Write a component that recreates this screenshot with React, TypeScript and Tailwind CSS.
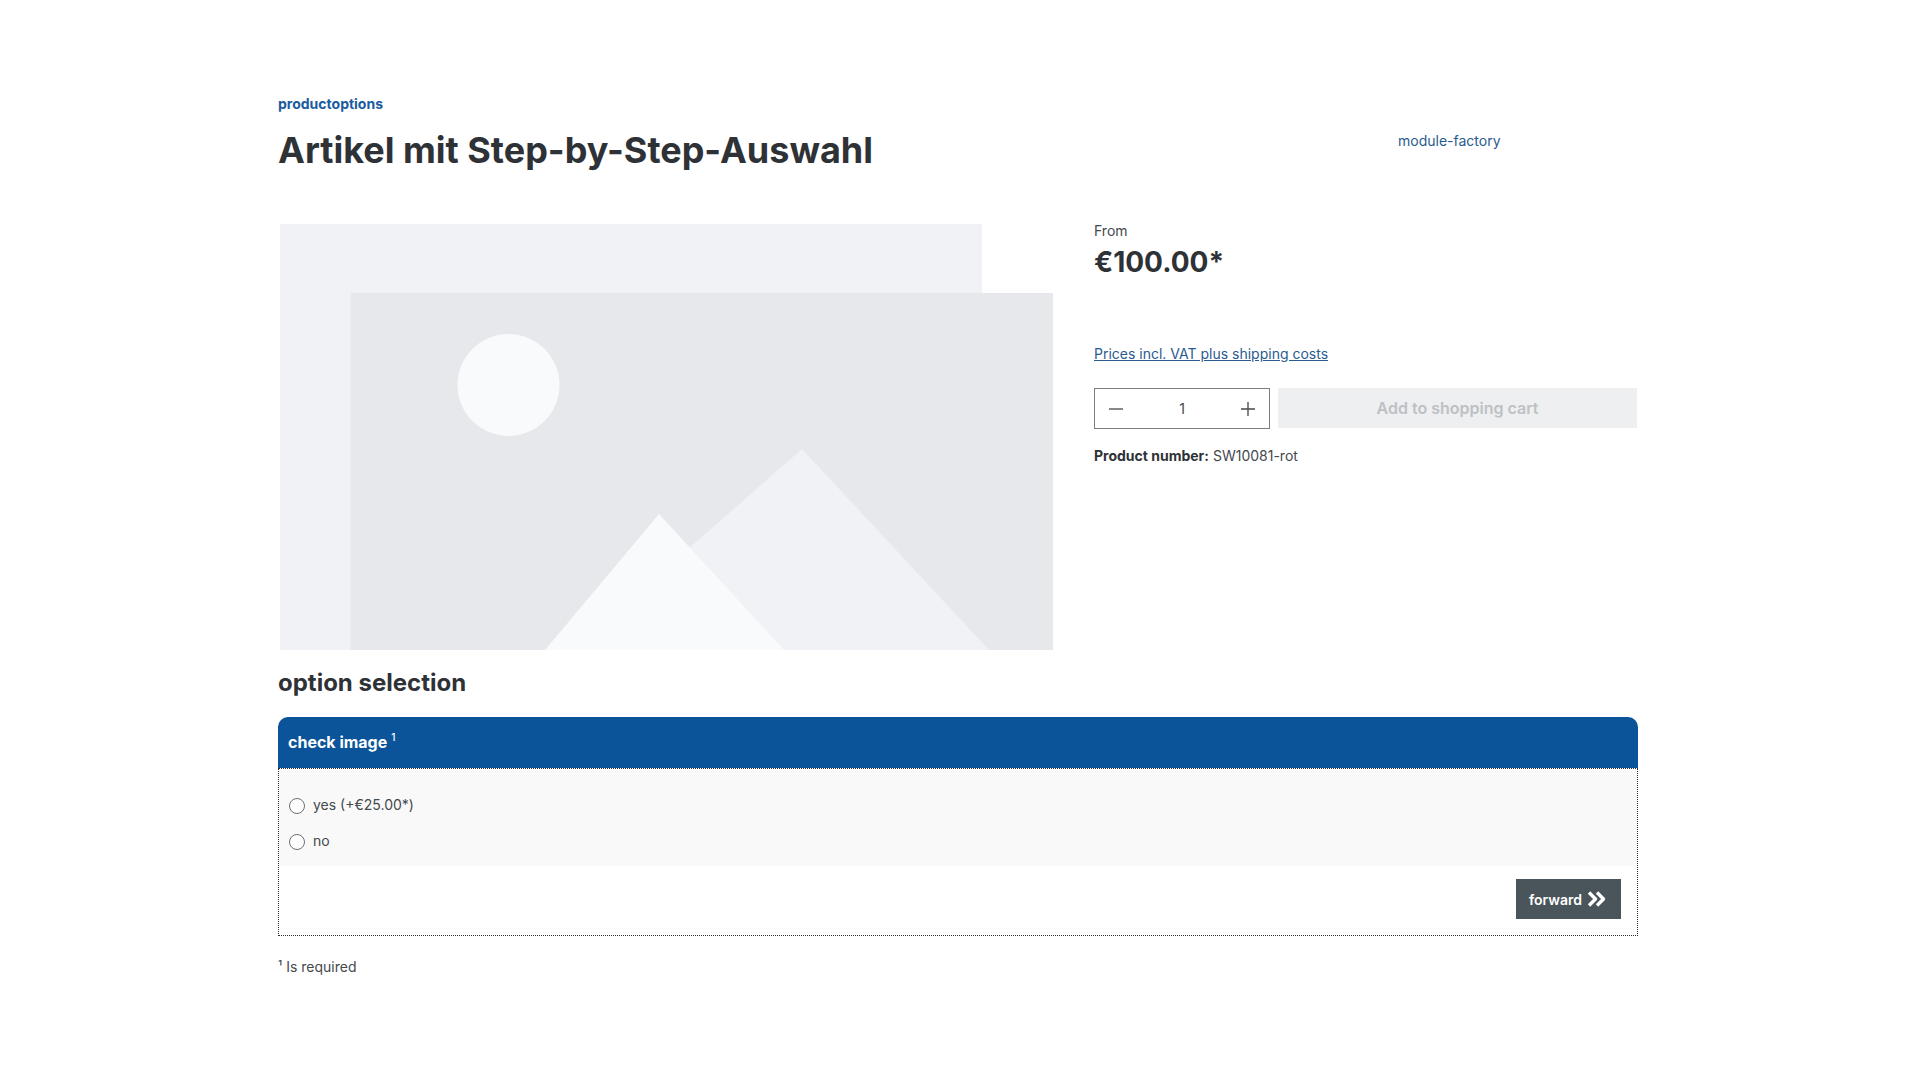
import React from "react";

function Placeholder() {
  return (
    <svg width="775" height="426" viewBox="0 0 775 426" className="block">
      <rect x="2" y="0" width="702" height="426" fill="#f0f2f5" />
      <rect x="72.5" y="69" width="702.5" height="357" fill="#e6e8eb" />
      <circle cx="230.5" cy="161" r="51" fill="#f9fafb" />
      <polygon points="295,426 524,225 711,426" fill="#f0f2f5" />
      <polygon points="267,426 381,290 506,426" fill="#f9fafb" />
    </svg>
  );
}

function Radio({ label }: { label: string }) {
  return (
    <div className="flex h-9 items-center">
      <span className="h-4 w-4 rounded-full border border-[#6b7075] bg-white" />
      <span className="ml-2 text-sm leading-5 -translate-y-px text-[#44494d]">{label}</span>
    </div>
  );
}

export default function App() {
  return (
    <div className="min-h-screen bg-white font-['Inter',sans-serif] text-[#2e3236]">
      <div className="ml-[278px] w-[1360px] pt-[94px]">
        <div className="flex h-[130px] items-start">
          <div className="w-[1120px]">
            <a className="block text-[14px] leading-5 font-bold text-[#1a5c9f]">productoptions</a>
            <h1 className="mt-[14px] text-[36px] leading-[44px] font-bold">Artikel mit Step-by-Step-Auswahl</h1>
          </div>
          <a className="mt-[37px] text-[14px] leading-5 text-[#2a5b8f]">module-factory</a>
        </div>

        <div className="flex">
          <div className="w-[775px]">
            <Placeholder />
          </div>
          <div className="ml-[41px] w-[544px]">
            <div className="text-[14px] leading-5 mt-[-3px] text-[#44494d]">From</div>
            <div className="mt-[1px] text-[28px] leading-[40px] font-bold">€100.00*</div>
            <a className="mt-[62px] block text-[14px] leading-5 text-[#2a5b8f] underline">Prices incl. VAT plus shipping costs</a>
            <div className="mt-[24px] flex gap-2">
              <div className="flex h-[41px] w-[176px] items-center justify-between border border-[#7d7d7d] px-[13px]">
                <svg width="16" height="16" viewBox="0 0 16 16" fill="none" stroke="#44494d" strokeWidth="1.3">
                  <path d="M1 8h14" />
                </svg>
                <span className="text-[14px] text-[#44494d]">1</span>
                <svg width="16" height="16" viewBox="0 0 16 16" fill="none" stroke="#44494d" strokeWidth="1.3">
                  <path d="M1 8h14M8 1v14" />
                </svg>
              </div>
              <button className="h-10 w-[359px] bg-[#eeeff0] text-base font-semibold text-[#bcc1c5]">Add to shopping cart</button>
            </div>
            <div className="mt-[17px] text-[14px] leading-5 text-[#44494d]">
              <span className="font-bold text-[#2e3236]">Product number:</span> SW10081-rot
            </div>
          </div>
        </div>

        <h2 className="mt-[17px] text-2xl leading-8 font-bold">option selection</h2>

        <div className="mt-[18px]">
          <div className="flex h-[51px] items-center rounded-t-[10px] bg-[#0b5499] px-[10px] pb-[2px] text-base font-bold text-white">
            check image<sup className="ml-1 text-[10px] font-medium">1</sup>
          </div>
          <div className="border border-dotted border-[#2b3136]">
            <div className="bg-[#f9f9f9] pt-[19px] pb-[5px] pl-[10px] h-[97px]">
              <Radio label="yes (+€25.00*)" />
              <Radio label="no" />
            </div>
            <div className="flex justify-end pt-[13px] pr-4 pb-4">
              <button className="flex h-10 w-[105px] items-center justify-center gap-[5px] bg-[#4a545b] pr-[2px] text-[14px] font-semibold text-white">
                forward
                <svg width="19" height="16" viewBox="0 0 19 16" fill="none" stroke="#fff" strokeWidth="3.4" strokeLinejoin="round">
                  <path d="M2 1.5l6.5 6.5-6.5 6.5M10 1.5l6.5 6.5-6.5 6.5" />
                </svg>
              </button>
            </div>
          </div>
        </div>

        <div className="mt-[21px] text-[14px] leading-5 text-[#44494d]">¹ Is required</div>
      </div>
    </div>
  );
}
